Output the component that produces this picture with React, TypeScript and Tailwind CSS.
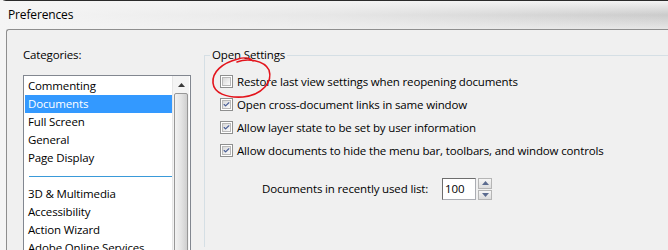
import { Check } from 'lucide-react'

const categories = ['Commenting', 'Documents', 'Full Screen', 'General', 'Page Display']
const moreCategories = ['3D & Multimedia', 'Accessibility', 'Action Wizard', 'Adobe Online Services']

const options = [
  { label: 'Restore last view settings when reopening documents', checked: false },
  { label: 'Open cross-document links in same window', checked: true },
  { label: 'Allow layer state to be set by user information', checked: true },
  { label: 'Allow documents to hide the menu bar, toolbars, and window controls', checked: true },
]

function CheckBox({ checked }: { checked: boolean }) {
  return (
    <div className="w-[13px] h-[13px] border border-[#8e8f8f] bg-white p-[1px] shrink-0">
      <div className="w-full h-full bg-gradient-to-br from-[#d8d8d8] to-[#fbfbfb] border border-[#b8b8b8] flex items-center justify-center">
        {checked && <Check className="w-[9px] h-[9px] text-[#4a5f97]" strokeWidth={4} />}
      </div>
    </div>
  )
}

function ListRow({ label, selected }: { label: string; selected?: boolean }) {
  return (
    <div
      className={`h-[18px] flex items-center pl-[3px] ${selected ? 'bg-[#3399ff] text-white' : 'text-black'}`}
    >
      {label}
    </div>
  )
}

export default function App() {
  return (
    <div
      className="w-[668px] h-[250px] overflow-hidden bg-[#f0f0f0] text-[11.5px] tracking-[-0.15px] text-black relative"
      style={{ fontFamily: '"Open Sans", "Noto Sans", sans-serif' }}
    >
      {/* Title bar */}
      <div className="h-[29px] border-t border-[#2a2a2a] rounded-tl-[6px] bg-gradient-to-b from-[#f4f4f4] via-[#cbcbcb] to-[#e6e6e6]">
        <div className="h-full flex items-center pl-[8px] pb-[1px] bg-gradient-to-r from-[#f5f5f5] via-[#f2f2f2]/70 to-transparent text-[12px]">
          Preferences
        </div>
      </div>

      {/* Body */}
      <div className="flex h-[221px] bg-[#f5f5f5]">
        <div className="w-[6px] shrink-0" />
        <div className="flex-1 flex border-t border-l border-[#8e8e8e] rounded-tl-[3px] bg-[#f0f0f0]">
          {/* Categories */}
          <div className="w-[190px] shrink-0 pl-[16px] pt-[17px]">
            <div className="h-[16px] leading-[16px]">Categories:</div>
            <div className="mt-[12px] w-[168px] h-[200px] border border-[#828790] bg-white flex">
              <div className="w-[148px] pl-[1px] pt-px">
                {categories.map((c) => (
                  <ListRow key={c} label={c} selected={c === 'Documents'} />
                ))}
                <div className="h-[18px] flex items-center pl-[4px]">
                  <div className="h-px w-full bg-[#3a9ad9]" />
                </div>
                {moreCategories.map((c) => (
                  <ListRow key={c} label={c} />
                ))}
              </div>
              <div className="w-[17px] bg-[#f4f4f4] border-l border-[#e6e6e6] flex flex-col">
                <div className="h-[17px] flex items-center justify-center">
                  <svg width="7" height="4" viewBox="0 0 7 4">
                    <path d="M0 4 L3.5 0 L7 4 Z" fill="#3a3a3a" />
                  </svg>
                </div>
                <div className="flex-1 mx-[1px] border border-[#979797] rounded-[2px] bg-gradient-to-r from-[#f2f2f2] via-[#e4e4e4] to-[#cfcfcf]" />
              </div>
            </div>
          </div>

          {/* Open Settings */}
          <div className="flex-1 pl-[7px] pt-[17px]">
            <fieldset className="border-t border-l border-[#d5dfe5] h-[200px]">
              <legend className="ml-[5px] px-[2px] leading-[16px]">Open Settings</legend>
              <div className="flex flex-col gap-[10px] pt-[12px] pl-[15px]">
                {options.map((o) => (
                  <label key={o.label} className="flex items-center gap-[4px] h-[13px] whitespace-nowrap">
                    <CheckBox checked={o.checked} />
                    <span>{o.label}</span>
                  </label>
                ))}
              </div>
              <div className="flex items-center mt-[21px] pl-[57px]">
                <span className="whitespace-nowrap">Documents in recently used list:</span>
                <div className="ml-[14px] w-[34px] h-[22px] border border-[#abadb3] border-t-[#6d6d6d] border-l-[#6d6d6d] bg-white pl-[2px] flex items-center">
                  100
                </div>
                <div className="ml-[2px] w-[14px] h-[22px] flex flex-col gap-px">
                  {['M0 4 L3.5 0 L7 4 Z', 'M0 0 L3.5 4 L7 0 Z'].map((d) => (
                    <div
                      key={d}
                      className="flex-1 border border-[#b5b5b5] bg-gradient-to-b from-[#f6f6f6] to-[#dcdcdc] flex items-center justify-center"
                    >
                      <svg width="7" height="4" viewBox="0 0 7 4">
                        <path d={d} fill="#5b6b8f" />
                      </svg>
                    </div>
                  ))}
                </div>
              </div>
            </fieldset>
          </div>
        </div>
      </div>

      {/* hand-drawn red circle around the first checkbox */}
      <svg className="absolute left-0 top-0 pointer-events-none" width="668" height="250">
        <path
          d="M237 62 C247 58 264 60 269 70 C273 82 262 95 243 97 C226 98 214 93 213 83 C212 72 222 63 238 59 C244 57 250 58 253 61"
          fill="none"
          stroke="#e3151d"
          strokeWidth="1.6"
          strokeLinecap="round"
        />
      </svg>
    </div>
  )
}
